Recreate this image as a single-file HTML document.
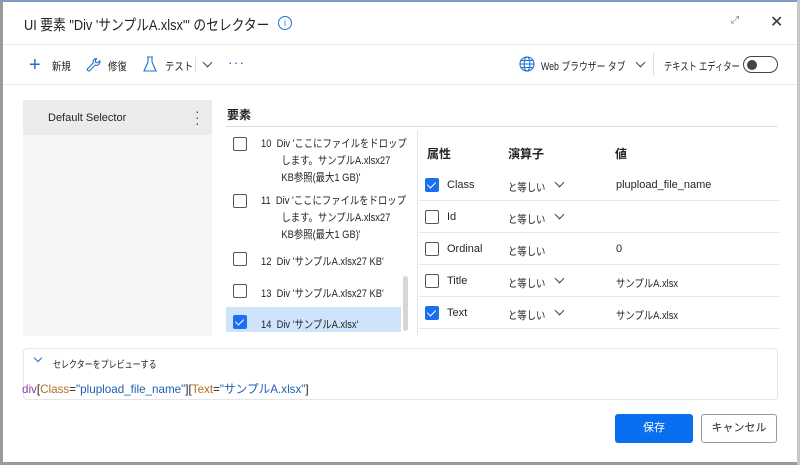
<!DOCTYPE html>
<html><head><meta charset="utf-8"><style>
*{box-sizing:border-box;margin:0;padding:0}
body{width:800px;height:465px;overflow:hidden;background:#fff;font-family:"Liberation Sans","Noto Sans CJK JP",sans-serif;color:#242424;position:relative}
.a{position:absolute}
.t{font-size:11px;white-space:nowrap}
.s{transform:scaleX(.85);transform-origin:0 0}
.cb{position:absolute;width:14px;height:14px;border:1.3px solid #555;border-radius:2px;background:#fff}
.cb.on{background:#1b6ff0;border-color:#1b6ff0}
.cb.on:after{content:"";position:absolute;left:3px;top:1px;width:4px;height:7px;border:solid #fff;border-width:0 1.3px 1.3px 0;transform:rotate(45deg)}
.hl{position:absolute;height:1px;background:#e6e6e6}
.chev{position:absolute;width:7px;height:7px;border:solid #444;border-width:0 1.3px 1.3px 0;transform:rotate(45deg)}
</style></head><body>
<div class="a" style="left:0;top:0;width:800px;height:2px;background:#7a9cc6"></div>
<div class="a" style="left:0;top:0;width:3px;height:465px;background:#9a9a9a"></div>
<div class="a" style="left:0;top:462px;width:800px;height:3px;background:#9a9a9a"></div>
<div class="a" style="left:797px;top:0;width:3px;height:465px;background:#c8c8c8"></div>

<div class="a s" style="left:24px;top:14px;font-size:15px;white-space:nowrap">UI 要素 "Div 'サンプルA.xlsx'" のセレクター</div>
<div class="a" style="left:278px;top:16px;width:14px;height:14px;border:1.3px solid #1f6fd0;border-radius:50%;color:#1f6fd0;font-size:9px;text-align:center;line-height:12px">i</div>
<div class="a" style="left:731px;top:15px;font-size:10px;color:#666">⤢</div>
<div class="a" style="left:770px;top:12px;font-size:16px;color:#333">✕</div>
<div class="hl" style="left:3px;top:44px;width:794px;background:#ebebeb"></div>

<div class="a" style="left:29px;top:55px;font-size:20px;color:#1f6fd0;line-height:20px">+</div>
<div class="a t s" style="left:52px;top:58px">新規</div>
<svg class="a" style="left:86px;top:57px" width="16" height="16" viewBox="0 0 16 16"><path d="M10.5 1.5a3.5 3.5 0 0 0-3.3 4.6L1.8 11.5a1.4 1.4 0 0 0 2 2l5.4-5.4a3.5 3.5 0 0 0 4.6-4.3l-2 2-2-.4-.4-2z" fill="none" stroke="#1f6fd0" stroke-width="1.1"/></svg>
<div class="a t s" style="left:108px;top:58px">修復</div>
<svg class="a" style="left:143px;top:56px" width="14" height="17" viewBox="0 0 14 17"><path d="M4 1h6M5 1v5L1 15h12L9 6V1" fill="none" stroke="#1f6fd0" stroke-width="1.1"/></svg>
<div class="a t s" style="left:165px;top:58px">テスト</div>
<div class="a" style="left:195px;top:57px;width:1px;height:15px;background:#ddd"></div>
<div class="chev" style="left:204px;top:59px"></div>
<div class="a" style="left:228px;top:54px;font-size:14px;color:#1f6fd0;letter-spacing:1px">···</div>

<svg class="a" style="left:519px;top:56px" width="16" height="16" viewBox="0 0 16 16"><g fill="none" stroke="#1f6fd0" stroke-width="1.1"><circle cx="8" cy="8" r="7"/><ellipse cx="8" cy="8" rx="3" ry="7"/><path d="M1 8h14M2 4.5h12M2 11.5h12"/></g></svg>
<div class="a t" style="left:541px;top:58px;transform:scaleX(.8);transform-origin:0 0">Web ブラウザー タブ</div>
<div class="chev" style="left:637px;top:59px"></div>
<div class="a" style="left:653px;top:53px;width:1px;height:23px;background:#ddd"></div>
<div class="a t" style="left:664px;top:58px;transform:scaleX(.75);transform-origin:0 0">テキスト エディター</div>
<div class="a" style="left:743px;top:56px;width:35px;height:17px;border:1.3px solid #444;border-radius:9px"></div>
<div class="a" style="left:747px;top:60px;width:10px;height:10px;border-radius:50%;background:#444"></div>
<div class="hl" style="left:3px;top:84px;width:794px;background:#ebebeb"></div>

<div class="a" style="left:23px;top:100px;width:189px;height:236px;background:#f6f6f6"></div>
<div class="a" style="left:23px;top:100px;width:189px;height:35px;background:#ebebeb"></div>
<div class="a t" style="left:48px;top:112px">Default Selector</div>
<div class="a" style="left:195px;top:108px;font-size:14px;line-height:6px;color:#444">·<br>·<br>·</div>

<div class="a" style="left:227px;top:106px;font-size:12px;font-weight:bold">要素</div>
<div class="hl" style="left:226px;top:126px;width:552px;background:#ddd"></div>

<div class="cb" style="left:233px;top:137px"></div>
<div class="a t s" style="left:261px;top:136px;line-height:17px">10&nbsp; Div 'ここにファイルをドロップ<br><span style="padding-left:24px">します。サンプルA.xlsx27</span><br><span style="padding-left:24px">KB参照(最大1 GB)'</span></div>
<div class="cb" style="left:233px;top:194px"></div>
<div class="a t s" style="left:261px;top:193px;line-height:17px">11&nbsp; Div 'ここにファイルをドロップ<br><span style="padding-left:24px">します。サンプルA.xlsx27</span><br><span style="padding-left:24px">KB参照(最大1 GB)'</span></div>
<div class="cb" style="left:233px;top:252px"></div>
<div class="a t s" style="left:261px;top:253px">12&nbsp; Div 'サンプルA.xlsx27 KB'</div>
<div class="cb" style="left:233px;top:284px"></div>
<div class="a t s" style="left:261px;top:285px">13&nbsp; Div 'サンプルA.xlsx27 KB'</div>
<div class="a" style="left:226px;top:307px;width:175px;height:25px;background:#cfe3fb"></div>
<div class="cb on" style="left:233px;top:315px"></div>
<div class="a t s" style="left:261px;top:316px">14&nbsp; Div 'サンプルA.xlsx'</div>
<div class="a" style="left:403px;top:276px;width:5px;height:55px;border-radius:3px;background:#d6d6d6"></div>
<div class="a" style="left:417px;top:130px;width:1px;height:206px;background:#e6e6e6"></div>

<div class="a" style="left:427px;top:145px;font-size:12px;font-weight:bold">属性</div>
<div class="a" style="left:508px;top:145px;font-size:12px;font-weight:bold">演算子</div>
<div class="a" style="left:615px;top:145px;font-size:12px;font-weight:bold">値</div>

<div class="cb on" style="left:425px;top:178px"></div><div class="a t" style="left:447px;top:179px">Class</div><div class="a t s" style="left:508px;top:179px">と等しい</div><div class="chev" style="left:556px;top:179px"></div><div class="a t" style="left:616px;top:179px">plupload_file_name</div>
<div class="hl" style="left:419px;top:200px;width:360px"></div>
<div class="cb" style="left:425px;top:210px"></div><div class="a t" style="left:447px;top:211px">Id</div><div class="a t s" style="left:508px;top:211px">と等しい</div><div class="chev" style="left:556px;top:211px"></div>
<div class="hl" style="left:419px;top:232px;width:360px"></div>
<div class="cb" style="left:425px;top:242px"></div><div class="a t" style="left:447px;top:243px">Ordinal</div><div class="a t s" style="left:508px;top:243px">と等しい</div><div class="a t" style="left:616px;top:243px">0</div>
<div class="hl" style="left:419px;top:264px;width:360px"></div>
<div class="cb" style="left:425px;top:274px"></div><div class="a t" style="left:447px;top:275px">Title</div><div class="a t s" style="left:508px;top:275px">と等しい</div><div class="chev" style="left:556px;top:275px"></div><div class="a t s" style="left:616px;top:275px">サンプルA.xlsx</div>
<div class="hl" style="left:419px;top:296px;width:360px"></div>
<div class="cb on" style="left:425px;top:306px"></div><div class="a t" style="left:447px;top:307px">Text</div><div class="a t s" style="left:508px;top:307px">と等しい</div><div class="chev" style="left:556px;top:307px"></div><div class="a t s" style="left:616px;top:307px">サンプルA.xlsx</div>
<div class="hl" style="left:419px;top:328px;width:360px"></div>

<div class="a" style="left:23px;top:348px;width:755px;height:52px;border:1px solid #e6e6e6;border-radius:4px"></div>
<div class="chev" style="left:35px;top:355px;width:6px;height:6px;border-color:#1f6fd0"></div>
<div class="a" style="left:53px;top:356px;font-size:10px;white-space:nowrap;transform:scaleX(.8);transform-origin:0 0">セレクターをプレビューする</div>
<div class="a" style="left:22px;top:380px;font-size:12px;white-space:nowrap;transform:scaleX(.97);transform-origin:0 0"><span style="color:#8a3fa8">div</span>[<span style="color:#b07020">Class</span>=<span style="color:#1f5fb0">"plupload_file_name"</span>][<span style="color:#b07020">Text</span>=<span style="color:#1f5fb0">"サンプルA.xlsx"</span>]</div>

<div class="a" style="left:615px;top:414px;width:78px;height:29px;background:#0a6ef0;border-radius:3px;color:#fff;font-size:11px;text-align:center;line-height:29px">保存</div>
<div class="a" style="left:701px;top:414px;width:76px;height:29px;border:1px solid #999;border-radius:3px;font-size:11px;text-align:center;line-height:27px">キャンセル</div>
</body></html>
